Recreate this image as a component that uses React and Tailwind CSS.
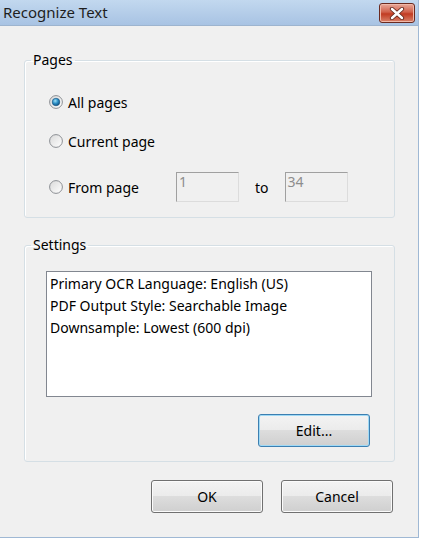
import React from 'react';

const font = { fontFamily: '"Noto Sans", "Open Sans", sans-serif' };

const Radio = ({ checked }) => (
  <svg width="14" height="14" viewBox="0 0 14 14" className="shrink-0">
    <defs>
      <linearGradient id="rb" x1="0" y1="0" x2="1" y2="1">
        <stop offset="0" stopColor="#d9d9d9" />
        <stop offset="1" stopColor="#ffffff" />
      </linearGradient>
      <radialGradient id="dot" cx="0.4" cy="0.35" r="0.7">
        <stop offset="0" stopColor="#9fe0f7" />
        <stop offset="0.5" stopColor="#2d8fc6" />
        <stop offset="1" stopColor="#0b4a7a" />
      </radialGradient>
    </defs>
    <circle cx="7" cy="7" r="6.4" fill="url(#rb)" stroke="#8c8f94" strokeWidth="1" />
    {checked && <circle cx="7" cy="7" r="3.8" fill="url(#dot)" stroke="#16507e" strokeWidth="0.6" />}
  </svg>
);

const Button = ({ children, focused, className = '' }) => (
  <button
    className={`h-[33px] w-[112px] rounded-[3px] border text-[14px] text-black ${
      focused ? 'border-[#3c7fb1] shadow-[inset_0_0_0_1px_#9fd9f5]' : 'border-[#707070] shadow-[inset_0_0_0_1px_#fbfbfb]'
    } bg-[linear-gradient(#f3f3f3_0%,#ebebeb_50%,#dddddd_50%,#cfcfcf_100%)] ${className}`}
    style={font}
  >
    {children}
  </button>
);

const Field = ({ value }) => (
  <div className="h-[30px] w-[63px] border border-t-[#a0a0a0] border-l-[#a0a0a0] border-r-[#dcdcdc] border-b-[#dcdcdc] bg-[#f0f0f0] px-[2px] text-[14px] leading-[18px] text-[#8d8d8d]">
    {value}
  </div>
);

export default function App() {
  return (
    <div className="w-[426px] h-[541px] bg-white text-[14px] text-black" style={font}>
      <div className="w-[419px] h-[538px] flex flex-col bg-[#f0f0f0] border-r border-b border-[#9fb8d4]">
        {/* title bar */}
        <div className="h-[26px] shrink-0 flex items-center justify-between pl-[3px] pr-[3px] bg-[linear-gradient(#c2d8ef,#a8c3e3)] border-b border-[#9db4cf]">
          <span className="text-[15px] leading-none text-[#1e1e1e]">Recognize Text</span>
          <div className="w-[36px] h-[20px] mt-[1px] rounded-[3px] border border-[#6b2a1f] bg-[linear-gradient(#e8a99a_0%,#d0604a_45%,#c13b22_55%,#d9826a_100%)] flex items-center justify-center shadow-[inset_0_0_0_1px_#f0b8a8]">
            <svg width="16" height="13" viewBox="0 0 16 13">
              <path d="M3 2 L13 11 M13 2 L3 11" stroke="#5a2218" strokeWidth="4.2" strokeLinecap="round" />
              <path d="M3 2 L13 11 M13 2 L3 11" stroke="#ffffff" strokeWidth="2.6" strokeLinecap="round" />
            </svg>
          </div>
        </div>

        {/* Pages */}
        <fieldset className="ml-[24px] mt-[26px] w-[371px] h-[166px] rounded-[3px] border border-[#d5dfe5] shadow-[inset_1px_1px_0_#ffffff]">
          <legend className="ml-[6px] px-[2px] text-[14px] leading-[16px]">Pages</legend>
          <div className="flex flex-col pl-[24px] pt-[24px]">
            <label className="h-[20px] flex items-center gap-[5px]">
              <Radio checked />
              <span>All pages</span>
            </label>
            <label className="mt-[19px] h-[20px] flex items-center gap-[5px]">
              <Radio />
              <span>Current page</span>
            </label>
            <div className="mt-[21px] h-[30px] flex items-center">
              <label className="w-[127px] flex items-center gap-[5px]">
                <Radio />
                <span>From page</span>
              </label>
              <Field value="1" />
              <span className="mx-[16px]">to</span>
              <Field value="34" />
            </div>
          </div>
        </fieldset>

        {/* Settings */}
        <fieldset className="ml-[24px] mt-[19px] w-[371px] h-[225px] rounded-[3px] border border-[#d5dfe5] shadow-[inset_1px_1px_0_#ffffff]">
          <legend className="ml-[6px] px-[2px] text-[14px] leading-[16px]">Settings</legend>
          <div className="pl-[21px] pt-[18px]">
            <div className="w-[326px] h-[126px] bg-white border border-[#828790] px-[3px] pt-[1px] leading-[22px]">
              <div>Primary OCR Language: English (US)</div>
              <div>PDF Output Style: Searchable Image</div>
              <div>Downsample: Lowest (600 dpi)</div>
            </div>
            <div className="w-[326px] flex justify-end pr-[2px] mt-[17px]">
              <Button focused>Edit...</Button>
            </div>
          </div>
        </fieldset>

        {/* footer buttons */}
        <div className="mt-[18px] flex gap-[18px] pl-[151px]">
          <Button>OK</Button>
          <Button>Cancel</Button>
        </div>
      </div>
    </div>
  );
}
